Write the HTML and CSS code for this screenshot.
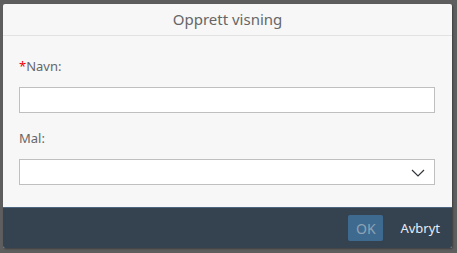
FILE: index.html
```html
<!DOCTYPE html>
<html>
<head>
<meta charset="utf-8">
<link rel="stylesheet" href="styles.css">
</head>
<body>
<div class="dialog">
  <div class="header">Opprett visning</div>
  <div class="content">
    <label class="label"><span class="req">*</span>Navn:</label>
    <div class="input"></div>
    <label class="label label-mal">Mal:</label>
    <div class="input select">
      <svg class="arrow" width="14" height="8" viewBox="0 0 14 8"><path d="M1 1 L7 7 L13 1" fill="none" stroke="#32363a" stroke-width="1.2"/></svg>
    </div>
  </div>
  <div class="footer">
    <button class="btn btn-ok">OK</button>
    <button class="btn btn-cancel">Avbryt</button>
  </div>
</div>
</body>
</html>
```
FILE: styles.css
```css
html, body {
  margin: 0;
  padding: 0;
  width: 457px;
  height: 253px;
  background: #5e5e5e;
  overflow: hidden;
  font-family: "Noto Sans", "Open Sans", sans-serif;
}
body {
  padding: 4px 0 0 3px;
  box-sizing: border-box;
}
.dialog {
  width: 449px;
  height: 244px;
  background: #f7f7f7;
  display: flex;
  flex-direction: column;
  box-shadow: 1px 1px 2px rgba(0,0,0,0.35);
  border-radius: 2px;
  overflow: hidden;
}
.header {
  height: 31px;
  border-bottom: 1px solid #e3e3e3;
  text-align: center;
  line-height: 30px;
  font-size: 15px;
  color: #666;
}
.content {
  flex: 1;
  padding: 21px 17px 0 16px;
  display: flex;
  flex-direction: column;
}
.label {
  font-size: 13px;
  color: #666;
  line-height: 18px;
  height: 18px;
}
.req { color: #e00; }
.label-mal { margin-top: 16px; }
.input {
  margin-top: 12px;
  height: 24px;
  border: 1px solid #bfbfbf;
  background: #fff;
  position: relative;
}
.select .arrow {
  position: absolute;
  right: 9px;
  top: 9px;
}
.footer {
  height: 40px;
  background: #354250;
  border-top: 1px solid #4d6680;
  display: flex;
  justify-content: flex-end;
  align-items: center;
  padding-right: 12px;
  gap: 17px;
}
.btn {
  font-family: inherit;
  font-size: 13px;
  border: none;
  height: 26px;
  border-radius: 2px;
  padding: 0;
}
.btn-ok {
  width: 35px;
  font-size: 14px;
  background: #3f6a8f;
  color: #8ca3b5;
}
.btn-cancel {
  background: transparent;
  color: #e4edf5;
  padding: 0;
}
```
